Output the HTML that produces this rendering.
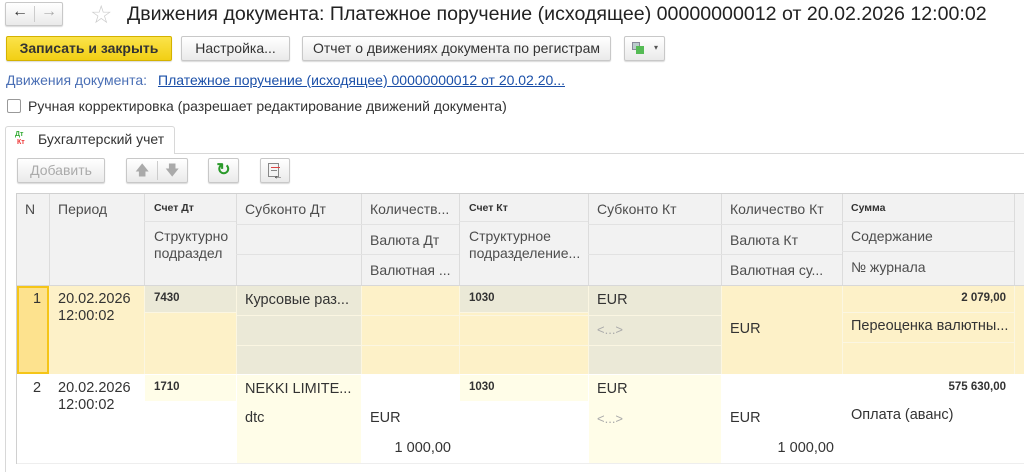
<!DOCTYPE html>
<html><head><meta charset="utf-8"><style>
*{margin:0;padding:0;box-sizing:border-box}
body{width:1024px;height:472px;overflow:hidden;background:#fff;font-family:"Liberation Sans",sans-serif;font-size:14px;color:#333;position:relative}
.a{position:absolute}
.btn{position:absolute;border:1px solid #c8c8c8;border-radius:2px;background:linear-gradient(#fff,#eaeaea);box-shadow:0 1px 1px rgba(0,0,0,.15);text-align:center;color:#333;font-size:14px}
.h{position:absolute;font-size:14px;color:#4d4d4d;white-space:nowrap}
.v{position:absolute;width:1px;background:#dcdcdc}
.hl{position:absolute;height:1px;background:#e2e2e2}
.tx{position:absolute;font-size:14.5px;color:#333;white-space:nowrap}
.h.b{font-weight:bold;font-size:10.5px;color:#333}
.tx.b{font-weight:bold;font-size:11.5px;color:#333}
</style></head><body>
<div class="btn" style="left:5px;top:2px;width:58px;height:24px"></div>
<div class="a" style="left:34px;top:6px;width:1px;height:16px;background:#ccc"></div>
<div class="a" style="left:12px;top:3px;font-size:16px;color:#333;font-weight:bold">&#8592;</div>
<div class="a" style="left:41px;top:3px;font-size:16px;color:#aaa;font-weight:bold">&#8594;</div>
<div class="a" style="left:90px;top:0px;font-size:25px;color:#ccc">&#9734;</div>
<div class="a" style="left:127px;top:3px;font-size:19.6px;color:#222;white-space:nowrap">Движения документа: Платежное поручение (исходящее) 00000000012 от 20.02.2026 12:00:02</div>
<div class="btn" style="left:6px;top:36px;width:166px;height:25px;background:linear-gradient(#fbe34a,#f2cf14);border-color:#d4b200;font-weight:bold;line-height:23px">Записать и закрыть</div>
<div class="btn" style="left:181px;top:36px;width:109px;height:25px;line-height:23px">Настройка...</div>
<div class="btn" style="left:302px;top:36px;width:309px;height:25px;line-height:23px">Отчет о движениях документа по регистрам</div>
<div class="btn" style="left:624px;top:36px;width:41px;height:25px"></div>
<div class="a" style="left:632px;top:42px;width:8px;height:8px;background:#bcc;border:1px solid #889"></div>
<div class="a" style="left:636px;top:46px;width:8px;height:8px;background:#5b5;"></div>
<div class="a" style="left:654px;top:43px;font-size:8px;color:#555">&#9662;</div>
<div class="a" style="left:6px;top:72px;color:#4a6fb5">Движения документа:</div>
<div class="a" style="left:158px;top:72px;color:#1a4fa8;text-decoration:underline">Платежное поручение (исходящее) 00000000012 от 20.02.20...</div>
<div class="a" style="left:7px;top:99px;width:14px;height:14px;border:1px solid #999;border-radius:2px;background:#fff"></div>
<div class="a" style="left:28px;top:98px">Ручная корректировка (разрешает редактирование движений документа)</div>
<div class="a" style="left:174px;top:153px;width:850px;height:1px;background:#d8d8d8"></div>
<div class="a" style="left:5px;top:153px;width:1px;height:319px;background:#d8d8d8"></div>
<div class="a" style="left:5px;top:126px;width:170px;height:28px;border:1px solid #d8d8d8;border-bottom:none;border-radius:3px 3px 0 0;background:#fff"></div>
<div class="a" style="left:15px;top:131px;font-size:7px;font-weight:bold;color:#3a3;line-height:7px">Дт</div>
<div class="a" style="left:17px;top:139px;font-size:7px;font-weight:bold;color:#e33;line-height:7px">Кт</div>
<div class="a" style="left:38px;top:131px;font-size:14px;color:#333">Бухгалтерский учет</div>
<div class="btn" style="left:17px;top:158px;width:88px;height:25px;line-height:23px;color:#aaa">Добавить</div>
<div class="btn" style="left:126px;top:158px;width:62px;height:25px"></div>
<div class="a" style="left:157px;top:161px;width:1px;height:19px;background:#ccc"></div>
<div class="a" style="left:135px;top:160px;color:#aaa;font-size:14px">&#129093;</div>
<div class="a" style="left:165px;top:160px;color:#aaa;font-size:14px">&#129095;</div>
<div class="btn" style="left:208px;top:158px;width:31px;height:25px;line-height:22px;color:#2a9a2a;font-size:17px;font-weight:bold">&#8635;</div>
<div class="btn" style="left:260px;top:158px;width:30px;height:25px"></div>
<div class="a" style="left:268px;top:163px;width:11px;height:14px;border:1px solid #888;background:#f4f4f4"></div>
<div class="a" style="left:271px;top:167px;width:9px;height:1px;background:#d44"></div>
<div class="a" style="left:271px;top:170px;width:6px;height:1px;background:#888"></div>
<div class="a" style="left:273px;top:171px;font-size:10px;color:#222">&#8592;</div>

<div class="a" style="left:16px;top:193px;width:1008px;height:271px;border:1px solid #d0d0d0;border-right:none"></div>
<div class="a" style="left:17px;top:194px;width:1007px;height:92px;background:#f2f2f2"></div>
<div class="v" style="left:49px;top:194px;height:92px"></div>
<div class="v" style="left:144px;top:194px;height:92px"></div>
<div class="v" style="left:236px;top:194px;height:92px"></div>
<div class="v" style="left:361px;top:194px;height:92px"></div>
<div class="v" style="left:459px;top:194px;height:92px"></div>
<div class="v" style="left:588px;top:194px;height:92px"></div>
<div class="v" style="left:721px;top:194px;height:92px"></div>
<div class="v" style="left:842px;top:194px;height:92px"></div>
<div class="v" style="left:1014px;top:194px;height:92px"></div>
<div class="hl" style="left:144px;top:221px;width:92px"></div>
<div class="hl" style="left:236px;top:224px;width:125px"></div><div class="hl" style="left:236px;top:254px;width:125px"></div>
<div class="hl" style="left:361px;top:224px;width:98px"></div><div class="hl" style="left:361px;top:254px;width:98px"></div>
<div class="hl" style="left:459px;top:221px;width:129px"></div>
<div class="hl" style="left:588px;top:224px;width:133px"></div><div class="hl" style="left:588px;top:254px;width:133px"></div>
<div class="hl" style="left:721px;top:224px;width:121px"></div><div class="hl" style="left:721px;top:254px;width:121px"></div>
<div class="hl" style="left:842px;top:221px;width:172px"></div><div class="hl" style="left:842px;top:251px;width:172px"></div>
<div class="a" style="left:17px;top:285px;width:1007px;height:1px;background:#d8d8d8"></div>
<div class="h" style="left:25px;top:201px">N</div>
<div class="h" style="left:58px;top:201px">Период</div>
<div class="h b" style="left:154px;top:202px">Счет Дт</div>
<div class="h" style="left:154px;top:228px;line-height:17px">Структурно<br>подраздел</div>
<div class="h" style="left:245px;top:201px">Субконто Дт</div>
<div class="h" style="left:370px;top:201px">Количеств...</div>
<div class="h" style="left:370px;top:232px">Валюта Дт</div>
<div class="h" style="left:370px;top:262px">Валютная ...</div>
<div class="h b" style="left:469px;top:202px">Счет Кт</div>
<div class="h" style="left:469px;top:228px;line-height:17px">Структурное<br>подразделение...</div>
<div class="h" style="left:597px;top:201px">Субконто Кт</div>
<div class="h" style="left:730px;top:201px">Количество Кт</div>
<div class="h" style="left:730px;top:232px">Валюта Кт</div>
<div class="h" style="left:730px;top:262px">Валютная су...</div>
<div class="h b" style="left:851px;top:202px">Сумма</div>
<div class="h" style="left:851px;top:228px">Содержание</div>
<div class="h" style="left:851px;top:259px">№ журнала</div>

<div class="a" style="left:17px;top:286px;width:1007px;height:88px;background:#fdf1c8"></div>
<div class="a" style="left:17px;top:286px;width:32px;height:88px;background:#fde28e;border:2px solid #f5c518"></div>
<div class="a" style="left:145px;top:286px;width:91px;height:26px;background:#ebe9d7"></div>
<div class="a" style="left:237px;top:286px;width:124px;height:88px;background:#ebe9d7"></div>
<div class="a" style="left:460px;top:286px;width:128px;height:26px;background:#ebe9d7"></div>
<div class="a" style="left:589px;top:286px;width:132px;height:88px;background:#ebe9d7"></div>
<div class="v" style="left:144px;top:286px;height:88px;background:#fbf6e2"></div>
<div class="v" style="left:236px;top:286px;height:88px;background:#fbf6e2"></div>
<div class="v" style="left:361px;top:286px;height:88px;background:#fbf6e2"></div>
<div class="v" style="left:459px;top:286px;height:88px;background:#fbf6e2"></div>
<div class="v" style="left:588px;top:286px;height:88px;background:#fbf6e2"></div>
<div class="v" style="left:721px;top:286px;height:88px;background:#fbf6e2"></div>
<div class="v" style="left:842px;top:286px;height:88px;background:#fbf6e2"></div>
<div class="v" style="left:1014px;top:286px;height:88px;background:#fbf6e2"></div>
<div class="hl" style="left:144px;top:312px;width:92px;background:#fbf6e2"></div>
<div class="hl" style="left:236px;top:315px;width:486px;background:#fbf6e2"></div>
<div class="hl" style="left:236px;top:345px;width:486px;background:#fbf6e2"></div>
<div class="hl" style="left:459px;top:312px;width:129px;background:#fbf6e2"></div>
<div class="hl" style="left:842px;top:312px;width:172px;background:#fbf6e2"></div>
<div class="hl" style="left:842px;top:342px;width:172px;background:#fbf6e2"></div>
<div class="tx" style="left:33px;top:291px">1</div>
<div class="tx" style="left:58px;top:291px;line-height:17px">20.02.2026<br>12:00:02</div>
<div class="tx b" style="left:154px;top:292px">7430</div>
<div class="tx" style="left:245px;top:292px">Курсовые раз...</div>
<div class="tx b" style="left:469px;top:292px">1030</div>
<div class="tx" style="left:597px;top:292px">EUR</div>
<div class="tx" style="left:597px;top:322px;color:#aaa;font-size:13px">&lt;...&gt;</div>
<div class="tx" style="left:730px;top:321px">EUR</div>
<div class="tx b" style="left:900px;top:292px;width:106px;text-align:right">2 079,00</div>
<div class="tx" style="left:851px;top:318px">Переоценка валютны...</div>

<div class="a" style="left:145px;top:375px;width:91px;height:26px;background:#fffde8"></div>
<div class="a" style="left:237px;top:375px;width:124px;height:88px;background:#fffde8"></div>
<div class="a" style="left:460px;top:375px;width:128px;height:26px;background:#fffde8"></div>
<div class="a" style="left:589px;top:375px;width:132px;height:88px;background:#fffde8"></div>
<div class="a" style="left:17px;top:463px;width:1007px;height:1px;background:#eee"></div>
<div class="tx" style="left:33px;top:380px">2</div>
<div class="tx" style="left:58px;top:380px;line-height:17px">20.02.2026<br>12:00:02</div>
<div class="tx b" style="left:154px;top:381px">1710</div>
<div class="tx" style="left:245px;top:381px">NEKKI LIMITE...</div>
<div class="tx" style="left:245px;top:410px">dtc</div>
<div class="tx" style="left:370px;top:410px">EUR</div>
<div class="tx" style="left:360px;top:440px;width:91px;text-align:right">1 000,00</div>
<div class="tx b" style="left:469px;top:381px">1030</div>
<div class="tx" style="left:597px;top:381px">EUR</div>
<div class="tx" style="left:597px;top:411px;color:#aaa;font-size:13px">&lt;...&gt;</div>
<div class="tx" style="left:730px;top:410px">EUR</div>
<div class="tx" style="left:720px;top:440px;width:114px;text-align:right">1 000,00</div>
<div class="tx b" style="left:880px;top:381px;width:126px;text-align:right">575 630,00</div>
<div class="tx" style="left:851px;top:407px">Оплата (аванс)</div>
</body></html>
